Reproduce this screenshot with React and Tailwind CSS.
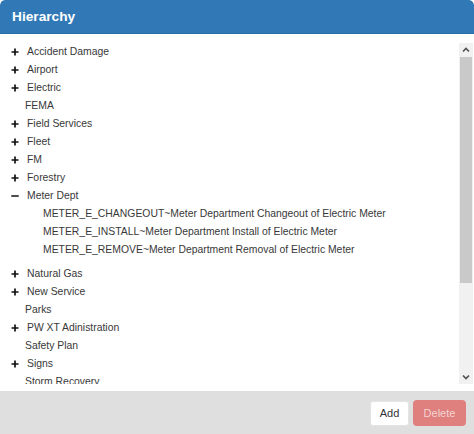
import React from "react";

const items = [
  { label: "Accident Damage", exp: "plus" },
  { label: "Airport", exp: "plus" },
  { label: "Electric", exp: "plus" },
  { label: "FEMA" },
  { label: "Field Services", exp: "plus" },
  { label: "Fleet", exp: "plus" },
  { label: "FM", exp: "plus" },
  { label: "Forestry", exp: "plus" },
  {
    label: "Meter Dept",
    exp: "minus",
    children: [
      "METER_E_CHANGEOUT~Meter Department Changeout of Electric Meter",
      "METER_E_INSTALL~Meter Department Install of Electric Meter",
      "METER_E_REMOVE~Meter Department Removal of Electric Meter",
    ],
  },
  { label: "Natural Gas", exp: "plus" },
  { label: "New Service", exp: "plus" },
  { label: "Parks" },
  { label: "PW XT Adinistration", exp: "plus" },
  { label: "Safety Plan" },
  { label: "Signs", exp: "plus" },
  { label: "Storm Recovery" },
];

function Plus() {
  return (
    <svg width="8" height="8" viewBox="0 0 8 8" className="block">
      <path d="M4 0.5V7.5M0.5 4H7.5" stroke="#111" strokeWidth="1.7" />
    </svg>
  );
}
function Minus() {
  return (
    <svg width="8" height="8" viewBox="0 0 8 8" className="block">
      <path d="M0.3 4H7.7" stroke="#111" strokeWidth="1.7" />
    </svg>
  );
}

function Row({ item }) {
  return (
    <>
      <div className="h-[18px] flex items-center">
        {item.exp ? (
          <>
            <span className="w-[8px] ml-[11px] flex items-center">
              {item.exp === "plus" ? <Plus /> : <Minus />}
            </span>
            <span className="ml-[8px]">{item.label}</span>
          </>
        ) : (
          <span className="ml-[25px]">{item.label}</span>
        )}
      </div>
      {item.children && (
        <div className="mb-[6px]">
          {item.children.map((c) => (
            <div key={c} className="h-[18px] flex items-center pl-[43px] whitespace-nowrap">
              {c}
            </div>
          ))}
        </div>
      )}
    </>
  );
}

export default function App() {
  return (
    <div
      className="w-[474px] h-[434px] flex flex-col bg-white overflow-hidden rounded-t-[5px]"
      style={{ fontFamily: '"Liberation Sans", Arial, sans-serif' }}
    >
      <div className="h-[34px] shrink-0 bg-[#3079b6] border-b border-[#2b6ea6] flex items-center pl-[12px] rounded-t-[5px]">
        <span className="text-white font-bold text-[13.7px] leading-none">Hierarchy</span>
      </div>
      <div className="pt-[9px] pb-[7px] bg-white shrink-0">
        <div className="h-[341px] flex mr-[1px]">
          <div className="flex-1 overflow-hidden text-[10.4px] text-[#383838] leading-none">
            {items.map((it) => (
              <Row key={it.label} item={it} />
            ))}
          </div>
          <div className="w-[14px] bg-[#f1f1f1] flex flex-col">
            <div className="h-[14px] flex items-center justify-center">
              <svg width="8" height="6" viewBox="0 0 8 6">
                <path d="M1 4.5L4 1.5L7 4.5" fill="none" stroke="#505050" strokeWidth="1.6" />
              </svg>
            </div>
            <div className="h-[226px] mx-[1px] bg-[#c9c9c9]" />
            <div className="flex-1" />
            <div className="h-[14px] flex items-center justify-center">
              <svg width="8" height="6" viewBox="0 0 8 6">
                <path d="M1 1.5L4 4.5L7 1.5" fill="none" stroke="#505050" strokeWidth="1.6" />
              </svg>
            </div>
          </div>
        </div>
      </div>
      <div className="flex-1 bg-[#dfdfdf] flex justify-end items-start pt-[10px] pr-[8px] gap-[4px]">
        <button className="h-[25px] w-[39px] bg-white border border-[#e4e4e4] rounded-[3px] text-[11px] text-[#333]">
          Add
        </button>
        <button className="h-[26px] w-[53px] -mt-[1px] bg-[#df807e] rounded-[4px] text-[11px] text-[#f6d3d2]">
          Delete
        </button>
      </div>
    </div>
  );
}
